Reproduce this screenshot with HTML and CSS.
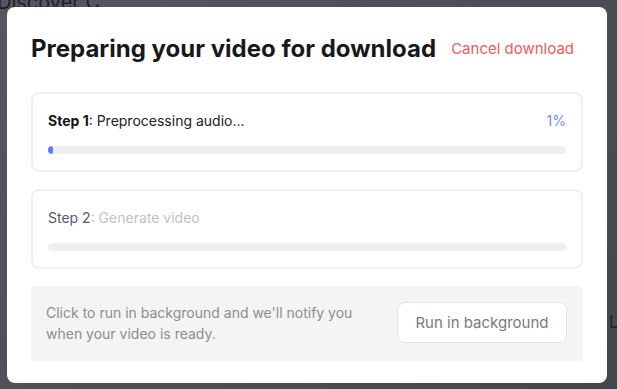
FILE: index.html
```html
<!DOCTYPE html>
<html lang="en">
<head>
<meta charset="utf-8">
<title>Preparing your video for download</title>
<link rel="stylesheet" href="styles.css">
</head>
<body>
<div class="page">
  <div class="page-title">Discover C</div>
  <div class="page-side">La</div>
</div>
<div class="overlay">
  <div class="modal">
    <div class="modal-header">
      <h1 class="modal-title">Preparing your video for download</h1>
      <button class="cancel-btn">Cancel download</button>
    </div>
    <div class="step step-active">
      <div class="step-row">
        <div class="step-label"><strong>Step 1</strong>: Preprocessing audio...</div>
        <div class="step-pct">1%</div>
      </div>
      <div class="bar"><div class="bar-fill" style="width: 5px"></div></div>
    </div>
    <div class="step step-pending">
      <div class="step-row">
        <div class="step-label"><span class="step-num">Step 2</span>: Generate video</div>
      </div>
      <div class="bar"></div>
    </div>
    <div class="bg-box">
      <p class="bg-text">Click to run in background and we'll notify you when your video is ready.</p>
      <button class="bg-btn">Run in background</button>
    </div>
  </div>
</div>
</body>
</html>
```
FILE: styles.css
```css
* { box-sizing: border-box; }
html, body { margin: 0; padding: 0; }
body {
  width: 617px;
  height: 389px;
  overflow: hidden;
  font-family: Inter, "Noto Sans", sans-serif;
  background: #4d4e56;
}
.page {
  position: relative;
  width: 617px;
  height: 389px;
  background: linear-gradient(135deg, #55565e 0%, #4b4c54 60%, #45464d 100%);
}
.page-title {
  position: absolute;
  left: -3px;
  top: -10px;
  font-size: 20px;
  color: #1f2026;
}
.page-side {
  position: absolute;
  left: 609px;
  top: 312px;
  font-size: 17px;
  color: #222329;
}
.overlay {
  position: fixed;
  inset: 0;
  display: flex;
  align-items: center;
  justify-content: flex-start;
  padding-left: 7px;
}
.modal {
  width: 600px;
  background: #fff;
  border-radius: 8px;
  padding: 24px 24px 22px 24px;
}
.modal-header {
  display: flex;
  align-items: center;
  justify-content: space-between;
  height: 36px;
  margin-bottom: 25px;
}
.modal-title {
  margin: 0;
  font-size: 24px;
  font-weight: 700;
  color: #18181b;
}
.cancel-btn {
  border: none;
  background: none;
  padding: 4px 9px 4px 8px;
  font-family: inherit;
  font-size: 15px;
  color: #f4585c;
  cursor: pointer;
}
.step {
  border: 2px solid #efefef;
  border-radius: 8px;
  padding: 17px 15px 16px;
}
.step + .step { margin-top: 17px; }
.step-row {
  display: flex;
  justify-content: space-between;
  align-items: center;
  height: 20px;
  font-size: 14px;
  line-height: 20px;
}
.step-label { color: #222; }
.step-label strong { font-weight: 700; color: #141414; }
.step-pct { color: #6e8ef6; font-size: 14px; }
.step-pending .step-label { color: #c2c2c6; }
.step-num { color: #545a6e; }
.bar {
  margin-top: 15px;
  height: 8px;
  border-radius: 4px;
  background: #efefef;
  overflow: hidden;
}
.bar-fill {
  height: 100%;
  background: #5b7cf6;
  border-radius: 4px;
}
.bg-box {
  margin-top: 17px;
  background: #f4f4f4;
  border-radius: 4px;
  padding: 16px 16px 17px 15px;
  display: flex;
  align-items: center;
  justify-content: space-between;
}
.bg-text {
  margin: 0;
  width: 320px;
  font-size: 14px;
  line-height: 21px;
  color: #8d8d8d;
}
.bg-btn {
  width: 170px;
  height: 41px;
  background: #fff;
  border: 1px solid #e4e4e4;
  border-radius: 8px;
  font-family: inherit;
  font-size: 15px;
  color: #7a7a7a;
  cursor: pointer;
}
```
